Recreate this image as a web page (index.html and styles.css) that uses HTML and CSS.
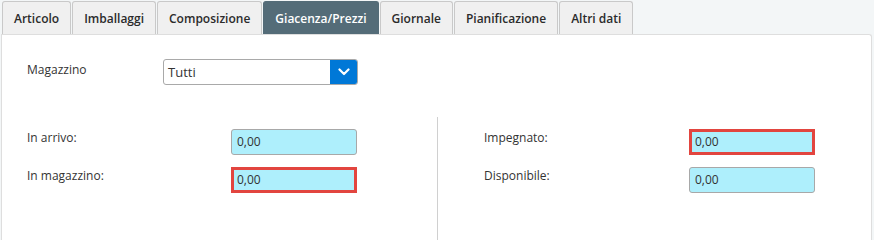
FILE: index.html
```html
<!DOCTYPE html>
<html lang="it">
<head>
<meta charset="utf-8">
<title>Giacenza/Prezzi</title>
<link rel="stylesheet" href="styles.css">
</head>
<body>
<div class="tabs">
  <div class="tab">Articolo</div>
  <div class="tab">Imballaggi</div>
  <div class="tab">Composizione</div>
  <div class="tab active">Giacenza/Prezzi</div>
  <div class="tab">Giornale</div>
  <div class="tab">Pianificazione</div>
  <div class="tab">Altri dati</div>
</div>
<div class="panel">
  <div class="row-mag">
    <div class="label mag-label">Magazzino</div>
    <div class="select">
      <div class="select-value">Tutti</div>
      <div class="select-btn">
        <svg width="12" height="8" viewBox="0 0 12 8"><path d="M1.5 1.5 L6 6 L10.5 1.5" fill="none" stroke="#fff" stroke-width="2.2" stroke-linecap="round" stroke-linejoin="round"/></svg>
      </div>
    </div>
  </div>
  <div class="cols">
    <div class="col col-left">
      <div class="field">
        <div class="label">In arrivo:</div>
        <div class="input">0,00</div>
      </div>
      <div class="field">
        <div class="label">In magazzino:</div>
        <div class="input error">0,00</div>
      </div>
    </div>
    <div class="col col-right">
      <div class="field">
        <div class="label">Impegnato:</div>
        <div class="input error">0,00</div>
      </div>
      <div class="field">
        <div class="label">Disponibile:</div>
        <div class="input">0,00</div>
      </div>
    </div>
  </div>
</div>
</body>
</html>
```
FILE: styles.css
```css
* { box-sizing: border-box; }
html, body { margin: 0; padding: 0; }
html { background: #f3f6f7; }
body {
  background: #f3f6f7;
  font-family: "Open Sans", "Noto Sans", sans-serif;
  color: #333;
  width: 874px;
  min-height: 100vh;
  display: flex;
  flex-direction: column;
}
.tabs {
  display: flex;
  gap: 1px;
  padding: 1px 0 0 2px;
  height: 34px;
  flex: none;
}
.tab {
  height: 33px;
  display: flex;
  align-items: center;
  padding: 0 11px;
  background: #f0f0f0;
  border: 1px solid #c9c9c9;
  border-bottom: none;
  border-radius: 3px 3px 0 0;
  font-size: 12px;
  font-weight: 600;
  color: #2b2b2b;
}
.tab.active {
  background: #546c78;
  border-color: #546c78;
  color: #fff;
}
.panel {
  flex: 1;
  display: flex;
  flex-direction: column;
  margin: 0 2px 0 1px;
  background: #fff;
  border: 1px solid #dedede;
  border-bottom: none;
  border-radius: 0 3px 0 0;
  min-height: 178px;
}
.label {
  font-size: 12px;
  color: #333;
  line-height: 16px;
  padding-top: 1px;
}
.row-mag {
  display: flex;
  padding: 24px 0 0 25px;
}
.mag-label { width: 136px; padding-top: 3px; }
.select {
  display: flex;
  width: 195px;
  height: 26px;
  border: 1px solid #a9a9a9;
  border-radius: 3px;
  overflow: hidden;
}
.select-value {
  flex: 1;
  font-size: 13px;
  line-height: 24px;
  padding-left: 4px;
  color: #333;
}
.select-btn {
  width: 28px;
  background: #0078d7;
  display: flex;
  align-items: center;
  justify-content: center;
  margin: -1px -1px -1px 0;
}
.cols {
  flex: 1;
  display: flex;
  margin-top: 32px;
}
.col {
  display: flex;
  flex-direction: column;
  gap: 12px;
  padding-top: 12px;
}
.col-left {
  width: 435px;
  padding-left: 25px;
}
.col-right {
  border-left: 1px solid #d0d0d0;
  padding-left: 46px;
}
.field {
  display: flex;
  align-items: flex-start;
}
.col-left .label { width: 204px; }
.col-right .label { width: 205px; }
.input {
  width: 126px;
  height: 26px;
  background: #aeeffc;
  border: 1px solid #a8a8a8;
  border-radius: 3px;
  font-size: 12px;
  line-height: 24px;
  padding-left: 5px;
  color: #333;
}
.input.error {
  border: 3px solid #e2453f;
  border-radius: 0;
  line-height: 20px;
  padding-left: 3px;
}
```
